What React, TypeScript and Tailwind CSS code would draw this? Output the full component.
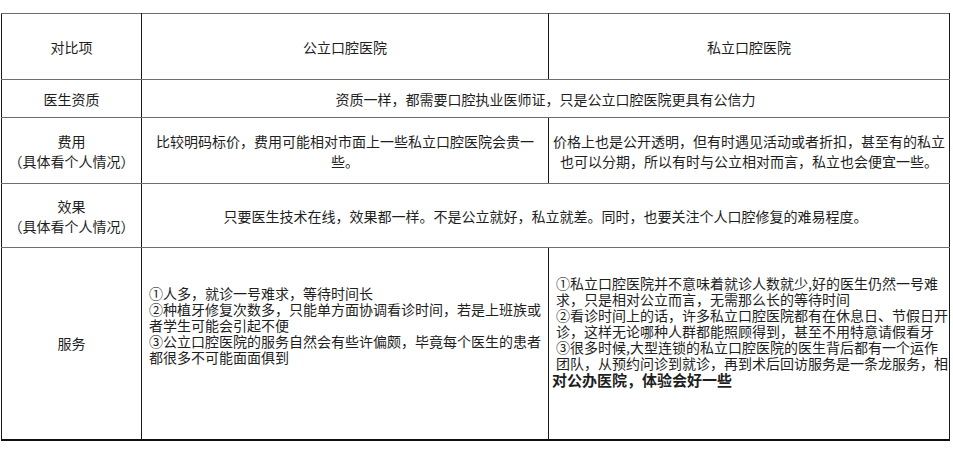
const cell =
  "border-x border-x-[#1a1a1a] border-y border-y-[#6e6e6e] text-[14px] text-[#1e1e1e] align-middle";

export default function App() {
  return (
    <div className="w-[953px] h-[449px] bg-white overflow-hidden font-['Noto_Sans_CJK_SC','Noto_Sans',sans-serif]">
      <table className="mt-[13px] ml-[1px] w-[948px] table-fixed border-collapse border-b-2 border-b-[#111]">
        <colgroup>
          <col className="w-[140px]" />
          <col className="w-[407px]" />
          <col className="w-[401px]" />
        </colgroup>
        <tbody>
          <tr>
            <td className={`${cell} h-[66px] text-center leading-5`}>对比项</td>
            <td className={`${cell} h-[66px] text-center leading-5`}>公立口腔医院</td>
            <td className={`${cell} h-[66px] text-center leading-5`}>私立口腔医院</td>
          </tr>
          <tr>
            <td className={`${cell} h-[38px] text-center leading-5`}>医生资质</td>
            <td colSpan={2} className={`${cell} h-[38px] text-center leading-5`}>
              资质一样，都需要口腔执业医师证，只是公立口腔医院更具有公信力
            </td>
          </tr>
          <tr>
            <td className={`${cell} h-[66px] text-center leading-5`}>
              费用
              <br />
              （具体看个人情况）
            </td>
            <td className={`${cell} h-[66px] text-center leading-5 whitespace-nowrap`}>
              比较明码标价，费用可能相对市面上一些私立口腔医院会贵一
              <br />
              些。
            </td>
            <td className={`${cell} h-[66px] text-center leading-5 whitespace-nowrap`}>
              价格上也是公开透明，但有时遇见活动或者折扣，甚至有的私立
              <br />
              也可以分期，所以有时与公立相对而言，私立也会便宜一些。
            </td>
          </tr>
          <tr>
            <td className={`${cell} h-[64px] text-center leading-5`}>
              效果
              <br />
              （具体看个人情况）
            </td>
            <td colSpan={2} className={`${cell} h-[64px] text-center leading-5`}>
              只要医生技术在线，效果都一样。不是公立就好，私立就差。同时，也要关注个人口腔修复的难易程度。
            </td>
          </tr>
          <tr>
            <td className={`${cell} h-[192px] text-center leading-5`}>服务</td>
            <td className={`${cell} h-[192px] !align-top pt-[37px] pl-[7px] leading-4 whitespace-nowrap`}>
              ①人多，就诊一号难求，等待时间长
              <br />
              ②种植牙修复次数多，只能单方面协调看诊时间，若是上班族或
              <br />
              者学生可能会引起不便
              <br />
              ③公立口腔医院的服务自然会有些许偏颇，毕竟每个医生的患者
              <br />
              都很多不可能面面俱到
            </td>
            <td className={`${cell} h-[192px] !align-top pt-[27px] pl-[7px] pr-0 leading-4 whitespace-nowrap`}>
              ①私立口腔医院并不意味着就诊人数就少,好的医生仍然一号难
              <br />
              求，只是相对公立而言，无需那么长的等待时间
              <br />
              ②看诊时间上的话，许多私立口腔医院都有在休息日、节假日开
              <br />
              诊，这样无论哪种人群都能照顾得到，甚至不用特意请假看牙
              <br />
              ③很多时候,大型连锁的私立口腔医院的医生背后都有一个运作
              <br />
              团队，从预约问诊到就诊，再到术后回访服务是一条龙服务，相
              <br />
              <span className="-ml-[4px] inline-block text-[15px] font-bold leading-[18px]">
                对公办医院，体验会好一些
              </span>
            </td>
          </tr>
        </tbody>
      </table>
    </div>
  );
}
